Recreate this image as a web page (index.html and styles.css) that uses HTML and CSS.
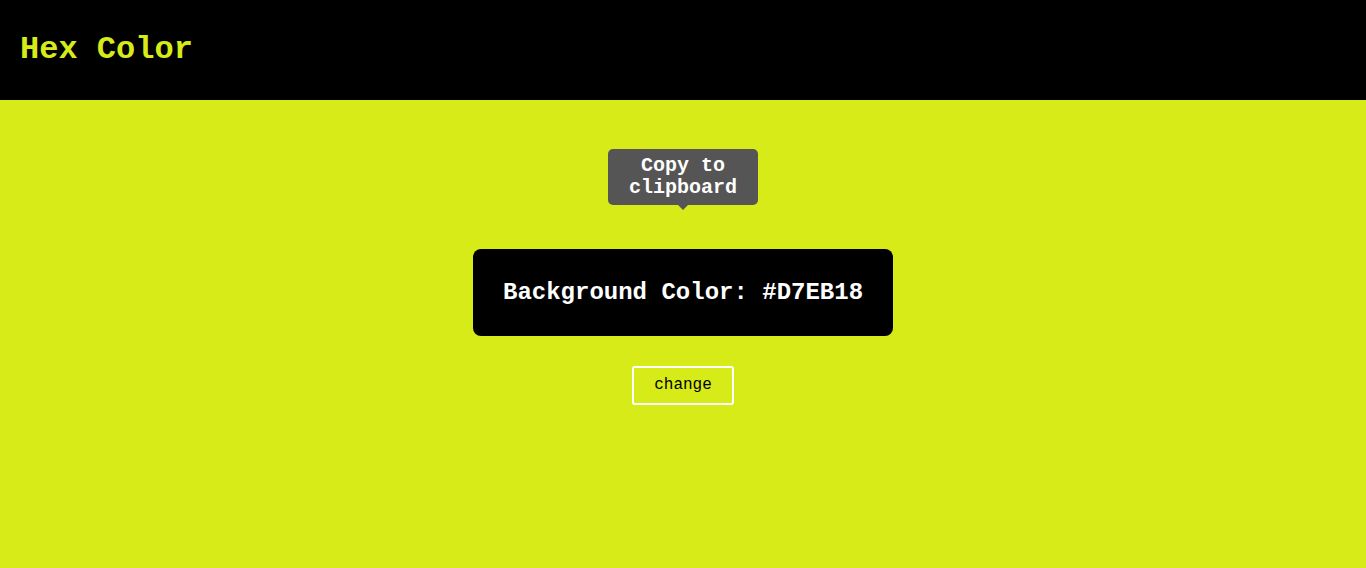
FILE: index.html
```html
<!DOCTYPE html>
<html lang="en">
<head>
<meta charset="utf-8">
<title>Hex Color</title>
<link rel="stylesheet" href="styles.css">
</head>
<body>
<header class="topbar">
  <h1 class="brand">Hex Color</h1>
</header>
<main class="stage">
  <div class="swatch">
    <span class="tooltip">Copy to clipboard</span>
    <div class="label">Background Color: #D7EB18</div>
  </div>
  <button class="change-btn" type="button">change</button>
</main>
</body>
</html>
```
FILE: styles.css
```css
* { box-sizing: border-box; }
html, body { margin: 0; padding: 0; }
body {
  background: #D7EB18;
  font-family: "Liberation Mono", "Courier New", monospace;
  min-height: 568px;
}
.topbar {
  background: #000;
  height: 100px;
  display: flex;
  align-items: center;
  padding-left: 20px;
}
.brand {
  margin: 0;
  color: #D7EB18;
  font-size: 32px;
  font-weight: bold;
  line-height: 36px;
}
.stage {
  display: flex;
  flex-direction: column;
  align-items: center;
  padding-top: 149px;
  gap: 30px;
}
.swatch {
  position: relative;
}
.label {
  background: #000;
  color: #fff;
  font-size: 24px;
  font-weight: bold;
  line-height: 27px;
  padding: 30px 30px;
  border-radius: 8px;
  width: 420px;
  text-align: center;
  white-space: nowrap;
}
.tooltip {
  position: absolute;
  bottom: calc(100% + 44px);
  left: 50%;
  transform: translateX(-50%);
  width: 150px;
  background: #555;
  color: #fff;
  font-size: 20px;
  font-weight: bold;
  line-height: 22.5px;
  padding: 5.5px 5px;
  border-radius: 5px;
  text-align: center;
}
.tooltip::after {
  content: "";
  position: absolute;
  top: 100%;
  left: 50%;
  margin-left: -5px;
  border: 5px solid transparent;
  border-top-color: #555;
}
.change-btn {
  background: transparent;
  border: 2px solid #fff;
  border-radius: 3px;
  font-family: "Liberation Mono", "Courier New", monospace;
  font-size: 16px;
  color: #000;
  padding: 9px 20px;
  line-height: 17px;
  cursor: pointer;
}
```
